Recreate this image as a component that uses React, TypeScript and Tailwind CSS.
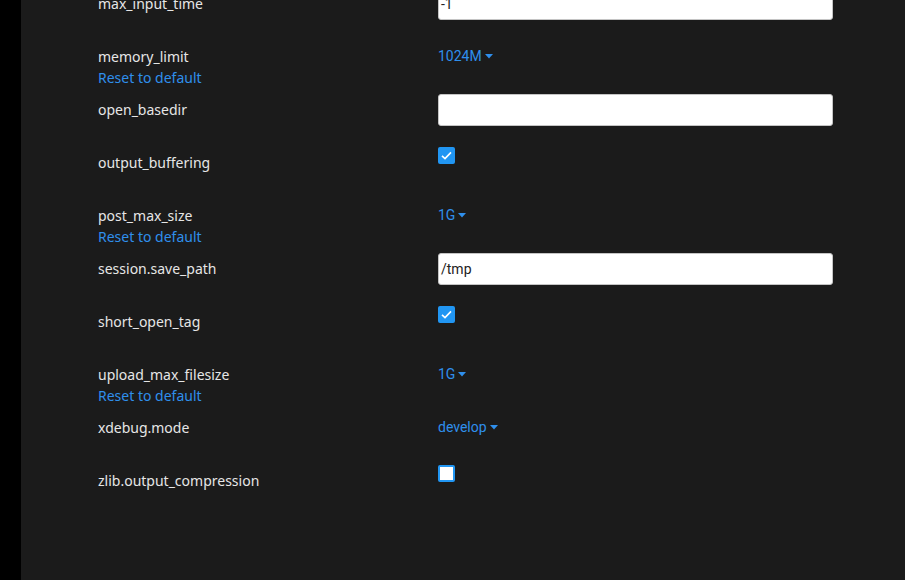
import React from "react";

type Row =
  | { label: string; kind: "input"; value: string; reset?: boolean }
  | { label: string; kind: "select"; value: string; reset?: boolean }
  | { label: string; kind: "check"; checked: boolean; reset?: boolean };

const rows: Row[] = [
  { label: "max_input_time", kind: "input", value: "-1" },
  { label: "memory_limit", kind: "select", value: "1024M", reset: true },
  { label: "open_basedir", kind: "input", value: "" },
  { label: "output_buffering", kind: "check", checked: true },
  { label: "post_max_size", kind: "select", value: "1G", reset: true },
  { label: "session.save_path", kind: "input", value: "/tmp" },
  { label: "short_open_tag", kind: "check", checked: true },
  { label: "upload_max_filesize", kind: "select", value: "1G", reset: true },
  { label: "xdebug.mode", kind: "select", value: "develop" },
  { label: "zlib.output_compression", kind: "check", checked: false },
];

function Control({ row }: { row: Row }) {
  if (row.kind === "input") {
    return (
      <div className="h-[32px] w-[395px] bg-white border border-[#c4c4c4] rounded-[3px] flex items-center pl-[2px] text-[14px] text-[#222] [font-family:Roboto,'Liberation_Sans',sans-serif]">
        {row.value}
      </div>
    );
  }
  if (row.kind === "select") {
    return (
      <div className="pt-[5px] flex items-center gap-[3px] text-[14px] leading-[20px] text-[#2f8fec] [font-family:Roboto,'Liberation_Sans',sans-serif]">
        <span>{row.value}</span>
        <svg width="8" height="5" viewBox="0 0 8 5" className="mt-[1px]">
          <path d="M0 0 L8 0 L4 4.5 Z" fill="#2f8fec" />
        </svg>
      </div>
    );
  }
  return row.checked ? (
    <div className="w-[17px] h-[17px] rounded-[2px] bg-[#2196f3] flex items-center justify-center">
      <svg width="13" height="13" viewBox="0 0 13 13">
        <path d="M2 6.8 L5 9.6 L11 3.4" stroke="white" strokeWidth="1.6" fill="none" />
      </svg>
    </div>
  ) : (
    <div className="w-[17px] h-[17px] rounded-[2px] bg-white border-[2px] border-[#2196f3]" />
  );
}

export default function App() {
  return (
    <div className="w-[905px] h-[580px] flex bg-black overflow-hidden">
      <div className="w-[21px] shrink-0 bg-black" />
      <div className="flex-1 bg-[#1b1b1b] pl-[77px] overflow-hidden">
        <div className="-mt-[12px] flex flex-col">
          {rows.map((row) => (
            <div key={row.label} className="h-[53px] flex shrink-0">
              <div className="w-[340px] shrink-0 pt-[6px] [font-family:'Noto_Sans','Open_Sans',sans-serif] text-[14px]">
                <div className="leading-[20px] text-[#e6e6e6]">{row.label}</div>
                {row.reset && (
                  <div className="leading-[21px] text-[#2f8fec]">Reset to default</div>
                )}
              </div>
              <div>
                <Control row={row} />
              </div>
            </div>
          ))}
        </div>
      </div>
    </div>
  );
}
